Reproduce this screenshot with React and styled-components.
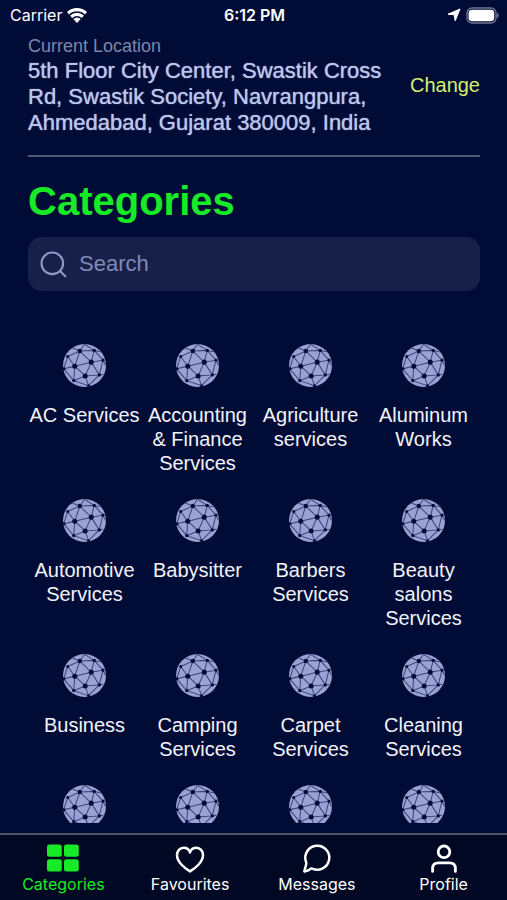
import React from "react";
import styled, { createGlobalStyle } from "styled-components";

const sans = '"Liberation Sans", Arial, sans-serif';
const system = 'Inter, "Liberation Sans", sans-serif';

const GlobalStyle = createGlobalStyle`
  *, *::before, *::after { box-sizing: border-box; }
  body { margin: 0; background: #000c36; }
  button, input { font: inherit; color: inherit; }
`;

const Screen = styled.div`
  display: flex;
  flex-direction: column;
  height: 100vh;
  background: #000c36;
  color: #f2f3fa;
  font-family: ${sans};
`;

const StatusBar = styled.header`
  display: grid;
  grid-template-columns: 1fr auto 1fr;
  align-items: center;
  flex: none;
  height: 30px;
  padding: 0 8px 0 10px;
  font: 500 16px/20px ${system};
  color: #ffffff;
`;

const StatusGroup = styled.div`
  display: flex;
  align-items: center;
  justify-content: ${(p) => (p.$end ? "flex-end" : "flex-start")};
  gap: 5px;
  font-weight: 400;
`;

const Clock = styled.time`
  font-weight: 600;
`;

const Main = styled.main`
  display: flex;
  flex-direction: column;
  flex: 1;
  min-height: 0;
  padding: 4px 27px 10px 28px;
`;

const LocationBar = styled.section`
  display: flex;
  align-items: center;
  gap: 24px;
  padding-bottom: 19px;
  border-bottom: 2px solid #50587a;
`;

const LocationText = styled.div`
  flex: 1;
  min-width: 0;
`;

const LocationLabel = styled.div`
  font-size: 18px;
  line-height: 24px;
  color: #7e86ae;
`;

const Address = styled.address`
  font-style: normal;
  font-size: 22px;
  line-height: 26px;
  color: #bcc5ec;
  text-shadow: 0 0 1px #bcc5ec;
`;

const ChangeButton = styled.button`
  padding: 0;
  border: 0;
  background: none;
  font-size: 20px;
  line-height: 24px;
  color: #d5f070;
  cursor: pointer;
`;

const Title = styled.h1`
  margin: 20px 0 12px;
  font-size: 40px;
  line-height: 48px;
  font-weight: 700;
  color: #17ea26;
`;

const SearchBox = styled.label`
  display: flex;
  align-items: center;
  flex: none;
  gap: 12px;
  height: 54px;
  padding: 0 12px;
  border-radius: 14px;
  background: #172048;
  color: #8f98c6;
`;

const SearchInput = styled.input`
  flex: 1;
  min-width: 0;
  padding: 0;
  border: 0;
  outline: 0;
  background: none;
  font-size: 22px;
  line-height: 28px;
  &::placeholder { color: #8089b8; opacity: 1; }
`;

const CategoryGrid = styled.ul`
  display: grid;
  grid-template-columns: repeat(4, 1fr);
  grid-auto-rows: max-content;
  flex: 1;
  min-height: 0;
  row-gap: 24px;
  margin: 53px 0 0;
  padding: 0;
  overflow-y: auto;
  scrollbar-width: none;
  list-style: none;
`;

const CategoryButton = styled.button`
  display: flex;
  flex-direction: column;
  align-items: center;
  width: 100%;
  gap: 16px;
  padding: 0;
  border: 0;
  background: none;
  font-size: 20px;
  line-height: 24px;
  text-align: center;
  cursor: pointer;
`;

const TabBar = styled.nav`
  display: grid;
  grid-template-columns: repeat(4, 1fr);
  flex: none;
  height: 67px;
  border-top: 2px solid #50526a;
  background: #000824;
`;

const Tab = styled.a`
  display: flex;
  flex-direction: column;
  align-items: center;
  padding-top: 7px;
  font: 400 16px/20px ${system};
  color: ${(p) => (p.$active ? "#17ea26" : "#ffffff")};
  text-decoration: none;
`;

const TabIcon = styled.span`
  display: grid;
  place-items: center;
  height: 32px;
`;

const WifiIcon = () => (
  <svg width="20" height="15" viewBox="0 0 20 15" fill="currentColor" aria-hidden="true">
    <path d="M0 4.1A14.4 14.4 0 0 1 20 4.1L18 6.4A11.5 11.5 0 0 0 2 6.4Z" />
    <path d="M3.1 7.6A9.8 9.8 0 0 1 16.9 7.6L14.8 9.9A7 7 0 0 0 5.2 9.9Z" />
    <path d="M6.3 11.1A5.3 5.3 0 0 1 13.7 11.1L10 14.9Z" />
  </svg>
);

const LocationArrow = () => (
  <svg width="14" height="14" viewBox="0 0 14 14" fill="currentColor" stroke="currentColor" strokeWidth="1" strokeLinejoin="round" aria-hidden="true">
    <path d="M13 1 8.2 12.8 7.2 6.8 1 6.2Z" />
  </svg>
);

const BatteryIcon = () => (
  <svg width="33" height="17" viewBox="0 0 33 17" aria-hidden="true">
    <rect x="1" y="1" width="29" height="15" rx="5" fill="none" stroke="#6f7590" strokeWidth="1.4" />
    <rect x="2.6" y="2.8" width="25.6" height="11.4" rx="3.4" fill="#ffffff" />
    <path d="M31 6q1.8.8 1.8 2.5T31 11Z" fill="#6f7590" />
  </svg>
);

const SearchIcon = () => (
  <svg width="27" height="27" viewBox="0 0 27 27" fill="none" stroke="currentColor" strokeWidth="2.1" strokeLinecap="round" aria-hidden="true">
    <circle cx="12.3" cy="12.3" r="10.8" />
    <path d="M20 20 25.3 25.3" />
  </svg>
);

const globeNodes = [
  [91, 48, 6.5], [134, 46, 5], [55, 64, 4.5], [125, 81, 7.5], [76, 93, 7.5], [160, 75, 4.5],
  [44, 101, 4.5], [107, 122, 7.5], [149, 119, 5], [73, 136, 5], [117, 151, 4.5],
];

const GlobeIcon = () => (
  <svg width="43" height="43" viewBox="41 27 128 128" aria-hidden="true">
    <circle cx="105" cy="91" r="64" fill="#99a2d3" />
    <g fill="none" stroke="#3b4479" strokeWidth="3">
      <path d="M91 48 134 46 125 81 91 48 55 64 76 93 91 48" />
      <path d="M125 81 160 75 134 46M76 93 125 81 107 122 76 93 43 101 55 64" />
      <path d="M125 81 149 119 107 122 73 136 76 93M43 101 73 136 117 151 107 122" />
      <path d="M149 119 160 75M149 119 117 151M91 48 105 28 134 46M91 48 69 39" />
      <path d="M134 46 153 50M160 75 168 91M149 119 161 117" />
    </g>
    <g fill="#020d38">
      {globeNodes.map(([x, y, r]) => <circle key={`${x}-${y}`} cx={x} cy={y} r={r} />)}
    </g>
  </svg>
);

const GridIcon = () => (
  <svg width="32" height="28" viewBox="0 0 32 28" fill="currentColor" aria-hidden="true">
    <rect x="0" y="0.5" width="14.8" height="12.3" rx="2.5" />
    <rect x="17" y="0.5" width="14.8" height="12.3" rx="2.5" />
    <rect x="0" y="15.2" width="14.8" height="12.3" rx="2.5" />
    <rect x="17" y="15.2" width="14.8" height="12.3" rx="2.5" />
  </svg>
);

const LineIcon = ({ children }) => (
  <svg width="30" height="30" viewBox="0 0 30 30" fill="none" stroke="currentColor" strokeWidth="2.5" strokeLinecap="round" strokeLinejoin="round" aria-hidden="true">
    {children}
  </svg>
);

const HeartIcon = () => (
  <LineIcon>
    <path d="M15 28.4C10 25.5 2 19 2 12.2C2 8 4.8 4.8 8.6 4.8C11.6 4.8 14 6.5 15 9.4C16 6.5 18.4 4.8 21.4 4.8C25.2 4.8 28 8 28 12.2C28 19 20 25.5 15 28.4Z" />
  </LineIcon>
);

const ChatIcon = () => (
  <LineIcon>
    <path d="M2.3 28.4 4 22Q4.6 20.3 4 18.8A12 12 0 1 1 10.2 25.6Q9 25.2 7.8 26.4Q6.4 27.8 2.3 28.4Z" />
  </LineIcon>
);

const ProfileIcon = () => (
  <LineIcon>
    <circle cx="15" cy="8.8" r="5.8" strokeWidth="2.8" />
    <path d="M3.6 28.4V25.6Q3.6 19.8 9.4 19.8H20.6Q26.4 19.8 26.4 25.6V28.4" strokeWidth="2.8" />
  </LineIcon>
);

const categories = [
  "AC Services", "Accounting & Finance Services", "Agriculture services", "Aluminum Works",
  "Automotive Services", "Babysitter", "Barbers Services", "Beauty salons Services",
  "Business", "Camping Services", "Carpet Services", "Cleaning Services",
  "", "", "", "",
];

const tabs = [
  { label: "Categories", Icon: GridIcon, active: true },
  { label: "Favourites", Icon: HeartIcon },
  { label: "Messages", Icon: ChatIcon },
  { label: "Profile", Icon: ProfileIcon },
];

export default function App() {
  return (
    <Screen>
      <GlobalStyle />
      <StatusBar>
        <StatusGroup>Carrier <WifiIcon /></StatusGroup>
        <Clock>6:12 PM</Clock>
        <StatusGroup $end><LocationArrow /><BatteryIcon /></StatusGroup>
      </StatusBar>
      <Main>
        <LocationBar>
          <LocationText>
            <LocationLabel>Current Location</LocationLabel>
            <Address>5th Floor City Center, Swastik Cross Rd, Swastik Society, Navrangpura, Ahmedabad, Gujarat 380009, India</Address>
          </LocationText>
          <ChangeButton type="button">Change</ChangeButton>
        </LocationBar>
        <Title>Categories</Title>
        <SearchBox>
          <SearchIcon />
          <SearchInput type="search" placeholder="Search" aria-label="Search" />
        </SearchBox>
        <CategoryGrid>
          {categories.map((name, i) => (
            <li key={i}>
              <CategoryButton type="button">
                <GlobeIcon />
                {name && <span>{name}</span>}
              </CategoryButton>
            </li>
          ))}
        </CategoryGrid>
      </Main>
      <TabBar>
        {tabs.map(({ label, Icon, active }) => (
          <Tab key={label} href="#" $active={active} aria-current={active ? "page" : undefined}>
            <TabIcon><Icon /></TabIcon>
            {label}
          </Tab>
        ))}
      </TabBar>
    </Screen>
  );
}
